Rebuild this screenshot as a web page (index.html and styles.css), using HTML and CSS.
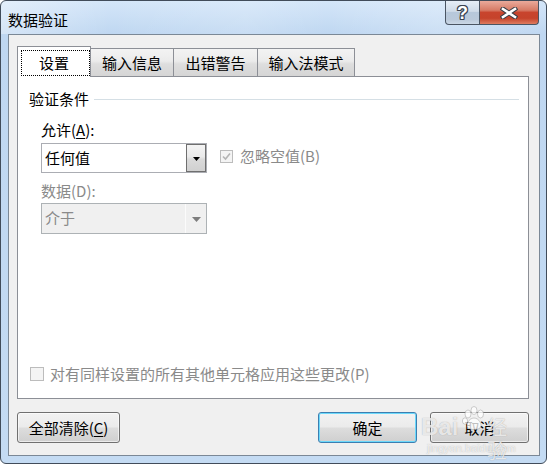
FILE: index.html
```html
<!DOCTYPE html>
<html lang="zh-CN">
<head>
<meta charset="utf-8">
<title>数据验证</title>
<link rel="stylesheet" href="styles.css">
</head>
<body>
<div class="window">
  <div class="titlebar">
    <span class="title">数据验证</span>
    <div class="caption">
      <div class="cbtn help"><span class="qmark">?</span></div>
      <div class="cbtn close">
        <svg width="18" height="12" viewBox="0 0 18 12"><path d="M3 2 L15 10 M15 2 L3 10" stroke="#3a3f47" stroke-width="4.6" stroke-linecap="square" fill="none"/><path d="M3 2 L15 10 M15 2 L3 10" stroke="#ffffff" stroke-width="2.6" stroke-linecap="square" fill="none"/></svg>
      </div>
    </div>
  </div>
  <div class="client">
    <div class="tabs">
      <div class="tab active"><span class="focus">设置</span></div>
      <div class="tab t2">输入信息</div>
      <div class="tab t3">出错警告</div>
      <div class="tab t4">输入法模式</div>
    </div>
    <div class="panel">
      <div class="group-title"><span>验证条件</span><div class="rule"></div></div>
      <div class="form">
        <div class="label lbl-allow">允许(<u>A</u>):</div>
        <div class="row">
          <div class="combo">
            <span class="value">任何值</span>
            <div class="drop"><svg width="7" height="4" viewBox="0 0 7 4"><path d="M0 0 H7 L3.5 4 Z" fill="#000"/></svg></div>
          </div>
          <div class="chk chk-ignore">
            <span class="box"><svg width="11" height="11" viewBox="0 0 11 11"><path d="M2 5.5 L4.5 8 L9 2.5" stroke="#b4b4b4" stroke-width="1.6" fill="none"/></svg></span>
            <span class="disabled-text">忽略空值(B)</span>
          </div>
        </div>
        <div class="label lbl-data disabled-text">数据(D):</div>
        <div class="combo off">
          <span class="value disabled-text">介于</span>
          <div class="drop"><svg width="9" height="5" viewBox="0 0 9 5"><path d="M0 0 H9 L4.5 5 Z" fill="#7d7d7d"/></svg></div>
        </div>
      </div>
      <div class="spacer"></div>
      <div class="chk chk-apply">
        <span class="box"></span>
        <span class="disabled-text">对有同样设置的所有其他单元格应用这些更改(P)</span>
      </div>
    </div>
    <div class="buttons">
      <button class="btn clear">全部清除(<u>C</u>)</button>
      <button class="btn ok">确定</button>
      <button class="btn cancel">取消</button>
    </div>
  </div>
  <div class="watermark">
    <span class="wm-bai">Bai</span>
    <svg class="wm-paw" width="26" height="26" viewBox="0 0 26 26"><g fill="rgba(255,255,255,0.75)" stroke="rgba(120,120,120,0.35)" stroke-width="1"><ellipse cx="7" cy="8" rx="3" ry="4"/><ellipse cx="13" cy="4.5" rx="3" ry="4"/><ellipse cx="19.5" cy="8" rx="3" ry="4"/><ellipse cx="4" cy="15" rx="2.6" ry="3.2"/><path d="M13 12 C18 12 22 19 19 22 C16 24 10 24 7 22 C4 19 8 12 13 12 Z"/></g></svg>
    <span class="wm-jy">经验</span>
    <span class="wm-url">jingyan.baidu.com</span>
  </div>
</div>
</body>
</html>
```
FILE: styles.css
```css
* { box-sizing: border-box; margin: 0; padding: 0; }
html, body { width: 547px; height: 464px; overflow: hidden; }
body {
  font-family: "Noto Sans", "Noto Sans CJK SC", sans-serif;
  font-size: 15px;
  color: #000;
  background: #ffffff;
}
u { text-decoration: underline; text-underline-offset: 2px; }

.window {
  position: relative;
  width: 547px;
  height: 464px;
  border: 1px solid #414c5a;
  border-radius: 6px;
  background:
    linear-gradient(to right, rgba(255,255,255,0.35), rgba(255,255,255,0) 20%, rgba(255,255,255,0.15) 45%, rgba(255,255,255,0) 60%, rgba(255,255,255,0.2) 80%, rgba(255,255,255,0)) 0 0 / 100% 33px no-repeat,
    linear-gradient(#d4e6f9, #bfd7f1 33px, #c4dbf3 100%);
  display: flex;
  flex-direction: column;
  overflow: hidden;
}

.titlebar {
  height: 33px;
  flex: none;
  display: flex;
  justify-content: space-between;
  align-items: flex-start;
  padding: 0 7px 0 7px;
}
.title {
  margin-top: 9px;
  line-height: 20px;
  font-family: "Noto Sans CJK SC", sans-serif;
  font-size: 15px;
  color: #000;
}
.caption { display: flex; }
.cbtn {
  height: 24px;
  border: 1px solid #4a5563;
  border-top: none;
  display: flex;
  align-items: center;
  justify-content: center;
}
.help {
  width: 35px;
  border-radius: 0 0 0 4px;
  background: linear-gradient(#e6eef7, #cfdbe8 45%, #b7c8db 50%, #bac9da 80%, #cbd8e6);
}
.qmark {
  font-family: "Liberation Sans", sans-serif;
  font-weight: bold;
  font-size: 18px;
  line-height: 18px;
  color: #ffffff;
  margin-top: 1px;
  text-shadow: 1px 0 0 #3a4350, -1px 0 0 #3a4350, 0 1px 0 #3a4350, 0 -1px 0 #3a4350, 1px 1px 0 #3a4350, -1px -1px 0 #3a4350, 1px -1px 0 #3a4350, -1px 1px 0 #3a4350;
}
.close {
  width: 59px;
  border-left: none;
  border-radius: 0 0 4px 0;
  background: linear-gradient(#eaaa9b, #d67b66 40%, #c8442d 50%, #c5432b 75%, #de7c60);
}

.client {
  flex: 1;
  margin: 0 6px 7px 7px;
  border: 1px solid #7b8896;
  background: #f0f0f0;
  display: flex;
  flex-direction: column;
  padding: 11px 10px 12px 8px;
}

.tabs {
  display: flex;
  align-items: flex-end;
  height: 31px;
  margin-bottom: -1px;
  position: relative;
  z-index: 1;
  font-family: "Noto Sans CJK SC", sans-serif;
}
.tab {
  height: 28px;
  margin-bottom: 1px;
  margin-left: -1px;
  border: 1px solid #8c8f96;
  border-bottom: none;
  background: linear-gradient(#f3f3f3, #ebebeb 45%, #dedede 55%, #d5d5d5);
  display: flex;
  align-items: center;
  justify-content: center;
  line-height: 20px;
}
.tab.active {
  width: 74px;
  height: 31px;
  margin-bottom: 0;
  margin-left: 0;
  background: #ffffff;
  position: relative;
  z-index: 2;
  align-items: stretch;
  justify-content: stretch;
  padding: 3px 0 1px 3px;
}
.focus {
  flex: 1;
  border: 1px dotted #000;
  display: flex;
  align-items: center;
  justify-content: center;
  padding-bottom: 1px;
  padding-right: 3px;
}
.t2 { width: 84px; }
.t3 { width: 85px; }
.t4 { width: 98px; }

.panel {
  height: 323px;
  flex: none;
  border: 1px solid #8c8f96;
  background: #ffffff;
  display: flex;
  flex-direction: column;
  padding: 12px 9px 14px 11px;
  font-family: "Noto Sans CJK SC", sans-serif;
}
.group-title {
  display: flex;
  align-items: center;
  height: 20px;
  line-height: 20px;
}
.rule {
  flex: 1;
  height: 1px;
  background: #d5dfe5;
  margin-left: 5px;
  margin-top: 1px;
}
.form {
  margin-left: 12px;
  display: flex;
  flex-direction: column;
}
.label { line-height: 20px; height: 20px; }
.lbl-allow { margin-top: 11px; }
.lbl-data { margin-top: 8px; }
.row {
  display: flex;
  align-items: flex-start;
  margin-top: 3px;
}
.combo {
  width: 166px;
  height: 30px;
  border: 1px solid #abadb3;
  background: #ffffff;
  display: flex;
  align-items: stretch;
}
.combo .value {
  flex: 1;
  padding-left: 3px;
  line-height: 28px;
  font-size: 15px;
}
.combo .drop {
  width: 20px;
  border: 1px solid #6f6f6f;
  margin: 0 0 0 auto;
  background: linear-gradient(#f4f4f4, #eaeaea 45%, #dadada 55%, #d0d0d0);
  display: flex;
  align-items: center;
  justify-content: center;
}
.combo .drop svg { margin-top: 1px; }
.combo.off {
  height: 31px;
  margin-top: 2px;
  border-color: #adb2b5;
  background: #f0f0f0;
}
.combo.off .drop {
  border: none;
  border-left: 1px solid #fbfbfb;
  width: 21px;
  background: #f0f0f0;
}

.disabled-text { color: #8a8a8a; }

.chk {
  display: flex;
  align-items: center;
  line-height: 20px;
}
.box {
  width: 13px;
  height: 13px;
  border: 1px solid #bcbcbc;
  background: #f4f4f4;
  display: flex;
  align-items: center;
  justify-content: center;
  flex: none;
}
.chk-ignore { margin-left: 13px; margin-top: 3px; }
.chk-ignore .box { margin-right: 7px; }
.chk-apply { margin-left: 1px; height: 20px; }
.chk-apply .box { margin-right: 6px; width: 14px; height: 14px; }

.spacer { flex: 1; }

.buttons {
  margin-top: 13px;
  display: flex;
  height: 31px;
  flex: none;
}
.btn {
  height: 31px;
  border: 1px solid #707070;
  border-radius: 3px;
  background: linear-gradient(#f2f2f2, #ebebeb 48%, #dddddd 52%, #cfcfcf);
  font-family: "Noto Sans CJK SC", sans-serif;
  font-size: 15px;
  color: #000;
  line-height: 20px;
  box-shadow: inset 0 0 0 1px rgba(255,255,255,0.6);
}
.clear { width: 103px; }
.ok {
  width: 99px;
  margin-left: auto;
  border-color: #3c7fb1;
  box-shadow: inset 0 0 0 1px #6cd9fb;
}
.cancel { width: 99px; margin-left: 13px; }

.watermark {
  position: absolute;
  left: 418px;
  top: 403px;
  width: 100px;
  height: 55px;
  pointer-events: none;
  font-family: "Liberation Sans", sans-serif;
  color: rgba(255,255,255,0.75);
}
.wm-bai {
  position: absolute;
  left: 2px;
  top: 9px;
  font-size: 24px;
  font-weight: bold;
  text-shadow: 0 0 1px rgba(110,110,110,0.6);
}
.wm-paw { position: absolute; left: 42px; top: 2px; }
.wm-jy {
  position: absolute;
  left: 68px;
  top: 11px;
  font-size: 20px;
  font-family: "Noto Sans CJK SC", sans-serif;
  line-height: 24px;
  text-shadow: 0 0 1px rgba(110,110,110,0.6);
}
.wm-url {
  position: absolute;
  left: 8px;
  top: 38px;
  font-size: 11px;
  text-shadow: 0 0 1px rgba(110,110,110,0.5);
}
```
